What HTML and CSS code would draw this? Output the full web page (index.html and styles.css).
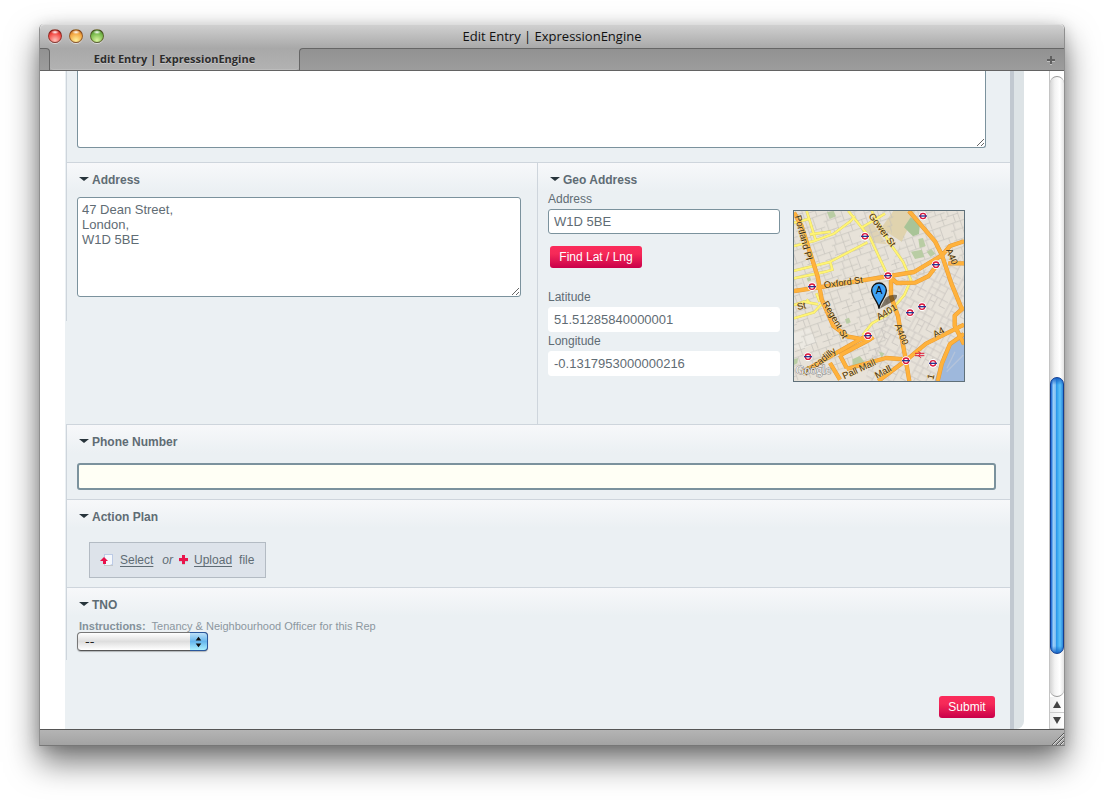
FILE: index.html
```html
<!DOCTYPE html>
<html lang="en">
<head>
<meta charset="utf-8">
<title>Edit Entry | ExpressionEngine</title>
<link rel="stylesheet" href="styles.css">
</head>
<body>
<div class="window">
  <header class="titlebar">
    <div class="lights">
      <button class="light light-red" type="button" aria-label="Close"></button>
      <button class="light light-yellow" type="button" aria-label="Minimise"></button>
      <button class="light light-green" type="button" aria-label="Zoom"></button>
    </div>
    <div class="window-title">Edit Entry | ExpressionEngine</div>
  </header>
  <nav class="tabbar">
    <span class="tab-before"></span>
    <button class="tab" type="button">Edit Entry | ExpressionEngine</button>
    <span class="tab-after">
      <button class="new-tab" type="button" aria-label="New tab">
        <svg width="10" height="10" viewBox="0 0 10 10"><path d="M4 2h2v3h3v2H6v3H4V7H1V5h3z" fill="#c0c0c0"/><path d="M4 1h2v3h3v2H6v3H4V6H1V4h3z" fill="#606060"/></svg>
      </button>
    </span>
  </nav>

  <div class="viewport">
    <main class="page">
      <form class="form">
        <section class="field field-first">
          <textarea class="box box-top" aria-label="Description"></textarea>
        </section>

        <div class="columns">
          <section class="field field-half">
            <label class="heading" for="address"><span class="caret"></span>Address</label>
            <textarea class="box box-address" id="address">47 Dean Street,
London,
W1D 5BE</textarea>
          </section>
          <section class="field field-geo">
            <h2 class="heading"><span class="caret"></span>Geo Address</h2>
            <div class="geo">
              <div class="geo-form">
                <label class="label" for="geo-address">Address</label>
                <input class="input input-line" id="geo-address" type="text" value="W1D 5BE">
                <button class="button button-find" type="button">Find Lat / Lng</button>
                <label class="label" for="lat">Latitude</label>
                <input class="input" id="lat" type="text" value="51.51285840000001">
                <label class="label" for="lng">Longitude</label>
                <input class="input" id="lng" type="text" value="-0.1317953000000216">
              </div>
              <svg class="map" viewBox="27 33 510 510" role="img" aria-label="Map of Soho, London">
                <defs>
                  <pattern id="grid-a" width="88" height="76" patternUnits="userSpaceOnUse" patternTransform="rotate(-19)">
                    <path d="M0 2h88M0 24h56M14 2v22M37 2v72M8 24v30M0 54h37M37 40h51M60 2v38M75 40v36M22 54v22M56 60h32" fill="none" stroke="#c3bfba" stroke-width="2"/>
                  </pattern>
                  <pattern id="grid-b" width="72" height="82" patternUnits="userSpaceOnUse" patternTransform="rotate(28)">
                    <path d="M0 3h72M6 3v79M27 3v40M6 23h46M52 3v60M6 43h66M38 43v39M52 63h20M20 60h18M20 43v39" fill="none" stroke="#c3bfba" stroke-width="2"/>
                  </pattern>
                  <g id="tube">
                    <circle r="13" fill="#fff"/>
                    <circle r="8" fill="#fff" stroke="#d9163c" stroke-width="4"/>
                    <path d="M-12 0h24" stroke="#243a94" stroke-width="4"/>
                  </g>
                </defs>
                <rect x="27" y="33" width="510" height="510" fill="#e7e2d9"/>
                <path d="M325 33h65l-20 50-20 42-62-40z" fill="#e0d3ae"/>
                <path d="M225 85l40-12 40 60-45-5z" fill="#dfd3b5"/>
                <path d="M27 400l45-15 25 40-50 26-20-10z" fill="#ece9e2"/>
                <path d="M27 33h300l-20 190-210 60-70 10z" fill="url(#grid-a)"/>
                <path d="M97 283l210-60 80-190h150v150L330 250l-40 240-263 53V293z" fill="url(#grid-a)"/>
                <path d="M320 245l220-80v378H240z" fill="url(#grid-b)"/>
                <path d="M357 82l20-30 28 16-3 34-18 7z" fill="#a9c497"/>
                <path d="M126 37l20-4 7 16-19 8zM400 117l14-3 8 24-18 6zM378 155l32-6 8 22-28 6zM425 155l14-8 12 14-14 10zM180 358l12-5 5 14-12 5zM202 478l22-10 18 22-25 15-14-8zM27 478l12-4-2 16-10 5zM282 455l16 5-8 14zM65 235l10-4 4 10-10 4zM518 455l19-15v22z" fill="#b9cda4"/>
                <path d="M537 402l-40 25-22 35-12 36-14 45h88z" fill="#9eb8dc"/>
                <path d="M510 455l-24 50M535 465l-50 50" stroke="#b4c3da" stroke-width="4"/>

                <path d="M190 33l65 80 50 107M65 33l28 90M27 68l44-11M27 138l60-15 60-22 50-38 12-15M75 103l62-8M230 83l70-42M27 212l105-25 115-60M27 235l95-20 20-6-6-22M260 33l50 90 44 62 24 55-20 45-52 60-45 25-28 35M27 315l30-10 42 8M27 355l60-18 22-24M65 298l10 12M94 280l10 25" fill="none" stroke="#d9cf66" stroke-width="8"/>
                <path d="M190 33l65 80 50 107M65 33l28 90M27 68l44-11M27 138l60-15 60-22 50-38 12-15M75 103l62-8M230 83l70-42M27 212l105-25 115-60M27 235l95-20 20-6-6-22M260 33l50 90 44 62 24 55-20 45-52 60-45 25-28 35M27 315l30-10 42 8M27 355l60-18 22-24M65 298l10 12M94 280l10 25" fill="none" stroke="#fff475" stroke-width="6"/>
                <g fill="none" stroke="#e79b35" stroke-width="13" stroke-linejoin="round">
                  <path d="M27 38l22 38 32 100 17 54 12 68 35 80 44 32 51 9M27 273l70-10 210-34 80-13 84-50 24-28 42-14M372 33l78 91 21 42 28 84 31 76M490 190h47M318 234l18 15 55-1 40-20 25-33M318 234v55l21 60 14 80 10 55 10 59M50 518l190-108M135 489l30 50M165 466l85-45 15-10M165 466l20 38M185 507l118-33 60 4M280 543l83-62 60-50 114-57M537 322l-28 25 0 30 28 56M537 402l-42 30-25 60-12 51"/>
                </g>
                <g fill="none" stroke="#ffb23c" stroke-width="10" stroke-linejoin="round">
                  <path d="M27 38l22 38 32 100 17 54 12 68 35 80 44 32 51 9M27 273l70-10 210-34 80-13 84-50 24-28 42-14M372 33l78 91 21 42 28 84 31 76M490 190h47M318 234l18 15 55-1 40-20 25-33M318 234v55l21 60 14 80 10 55 10 59M50 518l190-108M135 489l30 50M165 466l85-45 15-10M165 466l20 38M185 507l118-33 60 4M280 543l83-62 60-50 114-57M537 322l-28 25 0 30 28 56M537 402l-42 30-25 60-12 51"/>
                </g>

                <g class="map-text">
                  <text transform="translate(29 49) rotate(75)">Portland Pl</text>
                  <text transform="translate(250 48) rotate(54)">Gower St</text>
                  <text transform="translate(118 265) rotate(-8)">Oxford St</text>
                  <text transform="translate(112 310) rotate(60)">Regent St</text>
                  <text transform="translate(38 330) rotate(-12)">St</text>
                  <text transform="translate(282 361) rotate(-31)">A401</text>
                  <text transform="translate(329 376) rotate(68)">A400</text>
                  <text transform="translate(482 151) rotate(66)">A40</text>
                  <text transform="translate(450 413) rotate(-27)">A4</text>
                  <text transform="translate(63 528) rotate(-38)">Piccadilly</text>
                  <text transform="translate(178 538) rotate(-25)">Pall Mall</text>
                  <text transform="translate(276 536) rotate(-28)">Mall</text>
                  <text transform="translate(445 540) rotate(-76)">1</text>
                </g>
                <use href="#tube" x="414" y="48"/><use href="#tube" x="240" y="109"/><use href="#tube" x="453" y="194"/>
                <use href="#tube" x="309" y="227"/><use href="#tube" x="81" y="260"/><use href="#tube" x="411" y="320"/>
                <use href="#tube" x="375" y="338"/><use href="#tube" x="249" y="407"/><use href="#tube" x="69" y="470"/>
                <use href="#tube" x="363" y="482"/><use href="#tube" x="444" y="490"/>
                <path d="M390 460h28M390 467h28M400 455l8 5-8 7 8 6" fill="none" stroke="#e0203c" stroke-width="3"/>
                <path d="M284 326l18-33q15-12 34-8 2 13-14 20z" fill="#2a1c08" opacity=".55"/>
                <path d="M282 326c-1-20-22-34-22-55a22 22 0 0 1 44 0c0 21-21 35-22 55z" fill="#3fa2f5" stroke="#111" stroke-width="4"/>
                <text class="pin-letter" x="282" y="281">A</text>
                <text class="map-logo" x="32" y="521">Google</text>
              </svg>
            </div>
          </section>
        </div>

        <section class="field">
          <label class="heading" for="phone"><span class="caret"></span>Phone Number</label>
          <input class="phone" id="phone" type="text">
        </section>

        <section class="field">
          <h2 class="heading"><span class="caret"></span>Action Plan</h2>
          <div class="upload">
            <svg class="icon-file" width="14" height="14" viewBox="0 0 14 14"><path d="M4 1h9v11H4z" fill="#bccbe6"/><path d="M5 2h7v9l-2 1H5z" fill="#f5f8fc"/><path d="M4 12h9v1H4z" fill="#c4c8ca"/><path d="M4 4l4 4H6v3H3V8H0z" fill="#e8114b"/></svg>
            <a class="link" href="#select">Select</a>
            <em class="or">or</em>
            <svg class="icon-plus" width="9" height="10" viewBox="0 0 9 10"><path d="M3 1h3v3h3v3H6v3H3V7H0V4h3z" fill="#c9ccd4"/><path d="M3 0h3v3h3v3H6v3H3V6H0V3h3z" fill="#ea154c"/></svg>
            <a class="link" href="#upload">Upload</a>
            <span class="file">file</span>
          </div>
        </section>

        <section class="field field-tno">
          <label class="heading" for="tno"><span class="caret"></span>TNO</label>
          <p class="hint"><strong>Instructions:</strong>&nbsp; Tenancy &amp; Neighbourhood Officer for this Rep</p>
          <div class="picker">
            <select class="select" id="tno"><option>--</option></select>
            <svg class="picker-arrows" width="18" height="18" viewBox="0 0 18 18"><path d="M9 4l3 4H6zM9 15l3-4H6z" fill="#111"/></svg>
          </div>
        </section>

        <div class="actions"><button class="button button-submit" type="submit">Submit</button></div>
      </form>
    </main>

    <div class="scrollbar">
      <div class="track">
        <span class="track-above"></span>
        <span class="thumb"></span>
        <span class="track-below"></span>
      </div>
      <button class="step" type="button" aria-label="Scroll up"><svg width="8" height="7" viewBox="0 0 8 7"><path d="M4 0l4 7H0z" fill="#444"/></svg></button>
      <button class="step" type="button" aria-label="Scroll down"><svg width="8" height="7" viewBox="0 0 8 7"><path d="M4 7l4-7H0z" fill="#444"/></svg></button>
    </div>
  </div>

  <footer class="statusbar">
    <svg width="12" height="12" viewBox="0 0 12 12"><path d="M1 12L12 1M5 12l7-7M9 12l3-3" stroke="#dcdcdc"/><path d="M0 12L12 0M4 12l8-8M8 12l4-4" stroke="#555"/></svg>
  </footer>
</div>
</body>
</html>
```
FILE: styles.css
```css
* { box-sizing: border-box; }

body {
  margin: 0;
  min-height: 100vh;
  padding: 24px 39px 54px;
  display: flex;
  background: #fff;
  color: #5f6c74;
  font: 12px/16px "Liberation Sans", Arial, sans-serif;
}

button, input, textarea, select { font: inherit; color: inherit; margin: 0; }
button { border: 0; padding: 0; background: none; }

.window {
  flex: 1;
  min-width: 0;
  display: flex;
  flex-direction: column;
  border: 1px solid #8f8f8f;
  border-top: 0;
  border-bottom-color: #777;
  border-radius: 5px 5px 0 0;
  box-shadow: 0 16px 32px rgba(0, 0, 0, .55), 0 2px 14px rgba(0, 0, 0, .14);
}

/* Window chrome */
.titlebar {
  height: 24px;
  display: grid;
  grid-template-columns: 1fr auto 1fr;
  align-items: start;
  padding: 0 8px;
  border-top: 1px solid #ddd;
  border-radius: 5px 5px 0 0;
  background: linear-gradient(#d0d0d0, #a9a9a9);
}
.lights { display: flex; gap: 7px; padding-top: 4px; }
.light {
  width: 14px;
  height: 14px;
  border-radius: 50%;
  border: 1px solid rgba(60, 20, 10, .5);
  box-shadow: 0 1px 0 #ddd;
}
.light-red { background: radial-gradient(ellipse 4px 2px at 50% 18%, #fff, transparent), radial-gradient(circle at 50% 85%, #ffc0b8, #f34a45 60%, #9c1713); }
.light-yellow { background: radial-gradient(ellipse 4px 2px at 50% 18%, #fff, transparent), radial-gradient(circle at 50% 85%, #fff09a, #f3a541 60%, #a34f12); }
.light-green { background: radial-gradient(ellipse 4px 2px at 50% 18%, #fff, transparent), radial-gradient(circle at 50% 85%, #d9f5a0, #77b94b 60%, #35691d); }
.window-title { color: #111; font: 13px/22px "Open Sans", "Noto Sans", sans-serif; }

.tabbar { height: 23px; display: flex; background: #a9a9a9; border-bottom: 1px solid #636363; }
.tab-before, .tab-after { background: linear-gradient(#929292, #9c9c9c); border-top: 1px solid #666; }
.tab-before { width: 10px; border-right: 1px solid #666; border-top-right-radius: 4px; }
.tab {
  width: 249px;
  background: linear-gradient(#a8a8a8, #b2b2b2);
  border-bottom: 1px solid #bcbcbc;
  border-radius: 0 0 4px 4px;
  color: #2c2c2c;
  text-shadow: 0 1px 0 #c8c8c8;
  font: bold 11px/20px "Open Sans", "Noto Sans", sans-serif;
}
.tab-after {
  flex: 1;
  display: flex;
  align-items: center;
  justify-content: flex-end;
  padding-right: 8px;
  border-left: 1px solid #666;
  border-top-left-radius: 4px;
}
.new-tab svg { display: block; }

.viewport { flex: 1; display: flex; background: #fff; overflow: hidden; }
.statusbar {
  height: 16px;
  display: flex;
  justify-content: flex-end;
  align-items: flex-end;
  border-top: 1px solid #555;
  background: linear-gradient(#b4b4b4, #a3a3a3);
}

/* Entry form */
.page {
  flex: 1;
  min-width: 0;
  margin: 0 25px;
  padding-right: 10px;
  background: #dde3e6;
  border-bottom-right-radius: 8px;
}
.form {
  height: 100%;
  padding-left: 1px;
  background: #ebf0f3;
  border-right: 4px solid #c1c8d0;
}
.field {
  border-top: 1px solid #ced5dc;
  border-left: 1px solid #ced5dc;
  background: linear-gradient(#f7f8fa, #ebf0f3 28px);
  padding: 9px 14px 9px 10px;
}
.field-first { border-top: 0; background: none; padding: 0 24px 14px 10px; }
.columns { display: grid; grid-template-columns: calc(50% - 1px) 1fr; align-items: start; }
.field-half { padding: 9px 16px 24px 10px; }
.field-geo { padding-bottom: 42px; }

.heading {
  display: flex;
  align-items: center;
  gap: 3px;
  margin: 0 0 9px 2px;
  font-size: 12px;
  font-weight: bold;
  line-height: 16px;
}
.caret {
  margin-bottom: 3px;
  border: 5px solid transparent;
  border-top: 4px solid #27343b;
  border-bottom: 0;
}

.box, .input {
  display: block;
  width: 100%;
  border: 1px solid #7b929d;
  border-radius: 3px;
  background: #fff;
  font-size: 13px;
  line-height: 15px;
  outline: 0;
}
.box { padding: 4px; }
.box-top { height: 77px; border-top: 0; border-radius: 0 0 3px 3px; }
.box-address { height: 100px; }

.field-geo .heading { margin-bottom: 3px; }
.geo { display: flex; gap: 13px; align-items: flex-start; }
.geo-form { flex: 0 1 232px; min-width: 0; }
.label { display: block; line-height: 16px; margin-bottom: 2px; }
.input { height: 25px; padding: 0 5px; border-color: #fff; margin-bottom: 1px; }
.input-line { border-color: #7b929d; }
.button {
  height: 22px;
  padding: 0 9px;
  border-radius: 3px;
  background: linear-gradient(#fb2b5b, #f62a58 35%, #c9004a);
  color: #fff;
}
.button-find { display: block; min-width: 92px; margin: 12px 2px 21px; }
.button-submit { min-width: 56px; }
.map { width: 172px; height: 172px; margin-top: 19px; border: 1px solid #5f7079; }
.map-text { font: 28px "Liberation Sans", Arial, sans-serif; fill: #3a2c12; stroke: #ffd98c; stroke-width: 2px; paint-order: stroke; }
.pin-letter { font: 30px "Liberation Sans", Arial, sans-serif; fill: #000; text-anchor: middle; }
.map-logo { font: 36px "Liberation Serif", "Times New Roman", serif; fill: #f4f4f4; stroke: #888; stroke-width: 3px; paint-order: stroke; }

.phone {
  display: block;
  width: 100%;
  height: 27px;
  margin-top: 13px;
  padding: 0 5px;
  border: 2px solid #7b929d;
  border-radius: 3px;
  background: #fffff5;
  font-size: 13px;
  outline: 0;
}

.upload {
  display: inline-flex;
  align-items: center;
  height: 36px;
  margin: 8px 0 0 12px;
  padding: 0 10px;
  border: 1px solid #b3bbc3;
  background: #dde3ea;
  vertical-align: top;
}
.icon-file { margin-right: 6px; }
.link { color: inherit; text-underline-offset: 2px; }
.or { margin: 0 6px 0 9px; }
.icon-plus { margin-right: 6px; }
.file { margin: 0 1px 0 7px; }

.field-tno .heading { margin-bottom: 7px; }
.hint { margin: 0 0 0 2px; font-size: 11px; line-height: 12px; color: #8b979f; }
.hint strong { color: #84919a; }
.picker { position: relative; width: 131px; }
.select {
  display: block;
  width: 100%;
  height: 19px;
  padding: 0 7px;
  appearance: none;
  border: 1px solid #777;
  border-bottom-color: #555;
  border-radius: 4px;
  background: linear-gradient(#fff, #dedede 50%, #fff);
  color: #222;
  font: 13px/15px "DejaVu Sans", sans-serif;
  box-shadow: 0 1px 1px rgba(0, 0, 0, .25);
}
.picker-arrows {
  position: absolute;
  top: 0;
  right: 0;
  height: 19px;
  border: 1px solid #2a579c;
  border-left: 0;
  border-radius: 0 4px 4px 0;
  background: linear-gradient(#bce0f8, #66b6ec 50%, #a9f0ff);
  pointer-events: none;
}
.actions { display: flex; justify-content: flex-end; padding: 36px 15px 11px; }

/* Aqua scrollbar */
.scrollbar { width: 15px; display: flex; flex-direction: column; border-left: 1px solid #c4c4c4; background: #fff; }
.track {
  flex: 1;
  display: flex;
  flex-direction: column;
  margin-top: 5px;
  border-top: 1px solid #999;
  border-bottom: 1px solid #999;
  border-radius: 7px;
  background: linear-gradient(90deg, #d4d4d4, #f3f3f3 35%, #fff 70%, #e4e4e4);
}
.track-above { flex: 300; }
.thumb {
  flex: 276;
  border: 1px solid #123f94;
  border-radius: 7px;
  background:
    linear-gradient(#1b65c8, transparent 7px, transparent calc(100% - 7px), #1c6ac8),
    linear-gradient(90deg, #1562d4, #9bd0f7 20%, #7dbdf3 40%, #2b98ea 45%, #5dc3fa 75%, #2a86d8);
}
.track-below { flex: 42; }
.step { height: 16px; display: grid; place-items: center; border-bottom: 1px solid #ccc; background: linear-gradient(90deg, #eee, #fff); }
```
